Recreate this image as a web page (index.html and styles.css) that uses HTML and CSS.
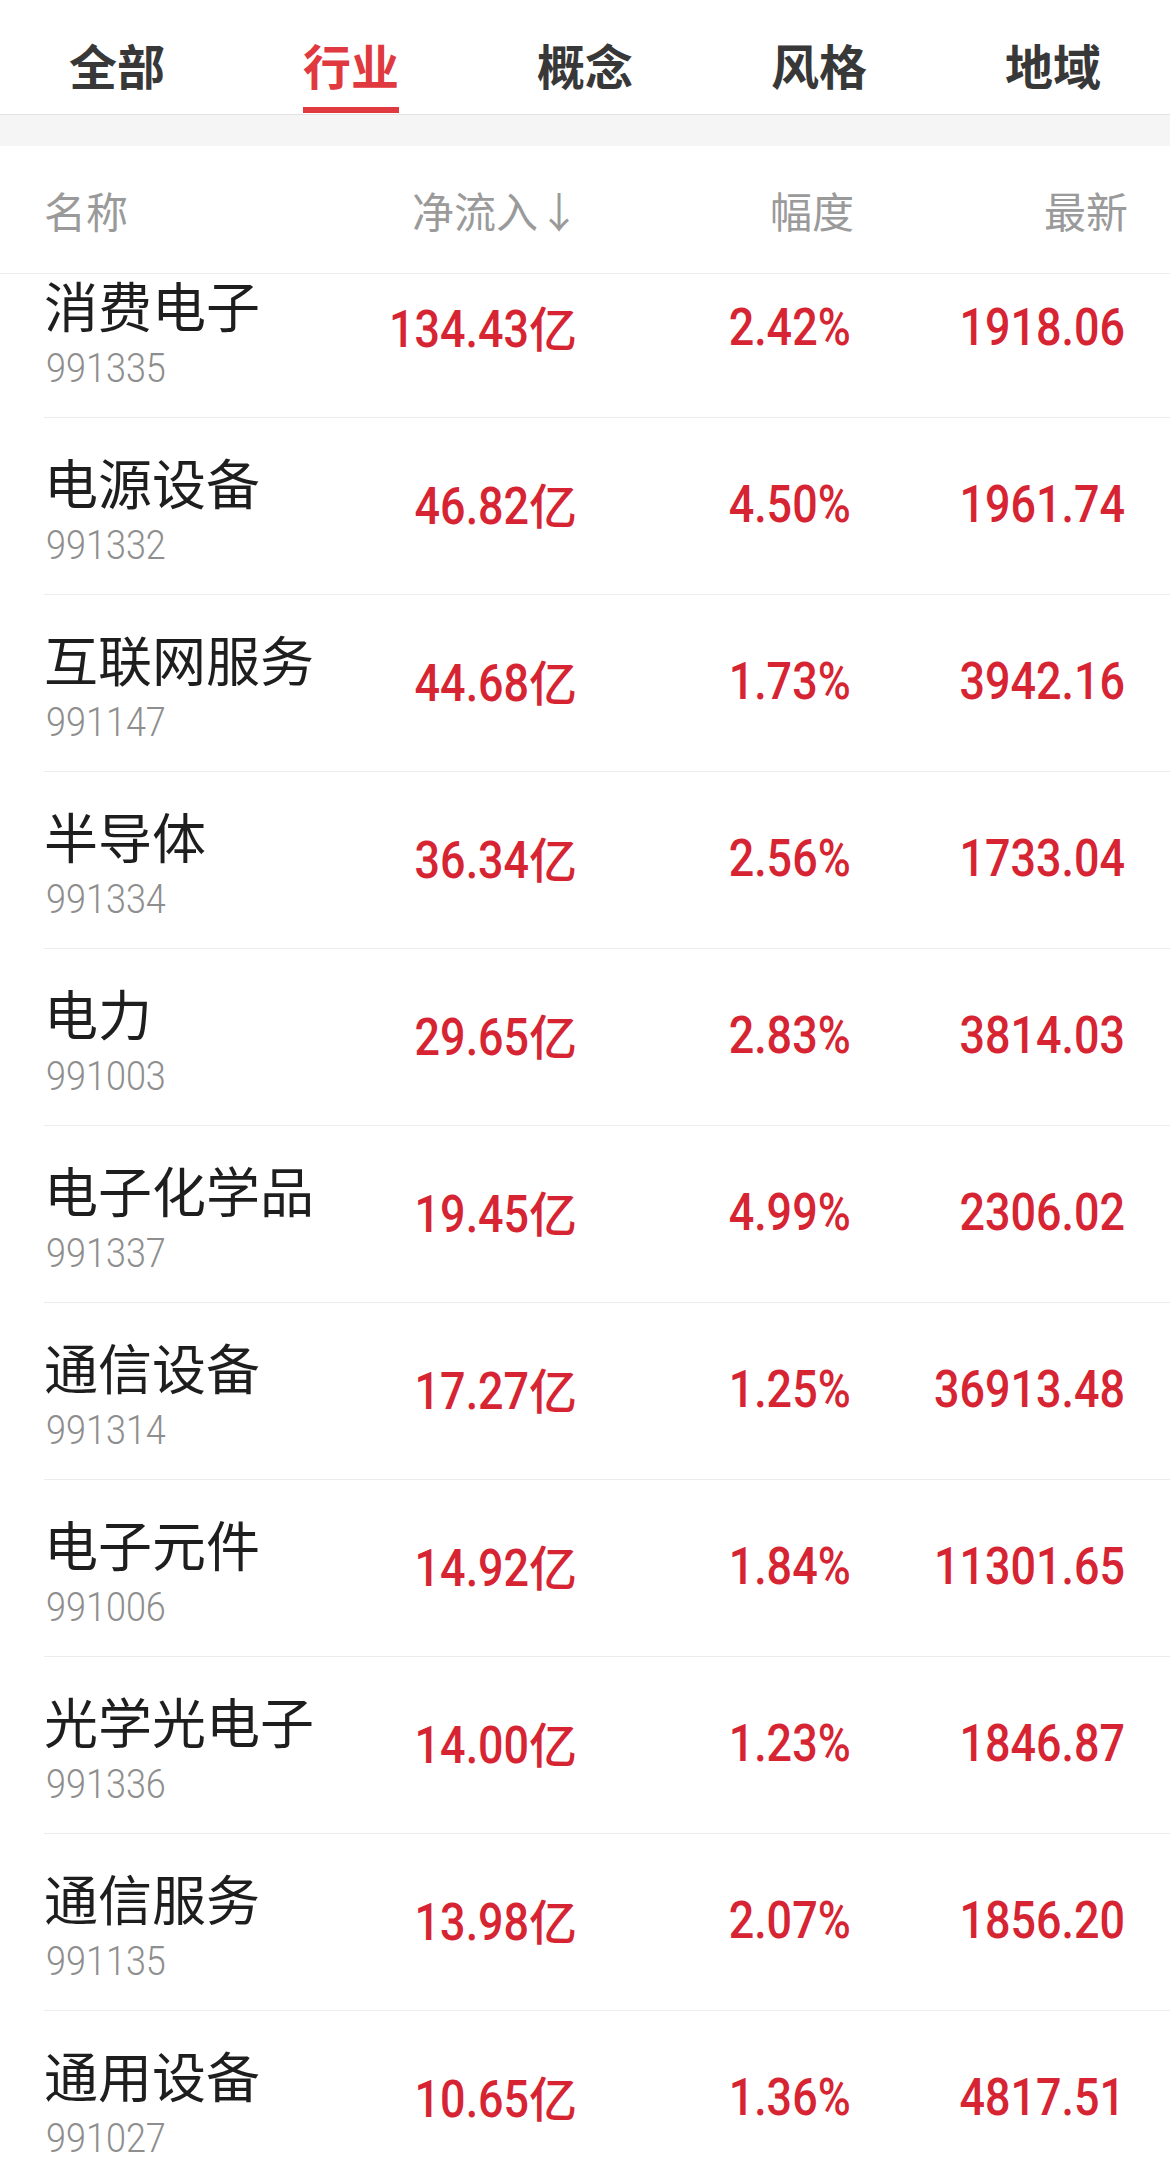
FILE: index.html
```html
<!DOCTYPE html>
<html lang="zh-CN">
<head>
    <meta charset="UTF-8">
    <meta name="viewport" content="width=device-width, initial-scale=1.0">
    <title>行业资金流向</title>
    <link rel="stylesheet" href="styles.css">
</head>
<body>
    <div class="tabs">
        <div class="tab"><span class="tab-label">全部</span></div>
        <div class="tab active"><span class="tab-label">行业</span></div>
        <div class="tab"><span class="tab-label">概念</span></div>
        <div class="tab"><span class="tab-label">风格</span></div>
        <div class="tab"><span class="tab-label">地域</span></div>
    </div>
    <div class="gap"></div>
    <div class="list-head">
        <span>名称</span>
        <span class="r">净流入↓</span>
        <span class="r">幅度</span>
        <span class="r">最新</span>
    </div>
    <div class="list">
        <!-- list is scrolled a little: the first row shows only its lower part -->
        <div class="row cut">
            <div class="name-cell"><div class="name">消费电子</div><div class="code"><span>991335</span></div></div>
            <div class="val"><span class="num">134.43</span><span class="unit">亿</span></div>
            <div class="val"><span class="num">2.42%</span></div>
            <div class="val"><span class="num">1918.06</span></div>
        </div>
        <div class="row">
            <div class="name-cell"><div class="name">电源设备</div><div class="code"><span>991332</span></div></div>
            <div class="val"><span class="num">46.82</span><span class="unit">亿</span></div>
            <div class="val"><span class="num">4.50%</span></div>
            <div class="val"><span class="num">1961.74</span></div>
        </div>
        <div class="row">
            <div class="name-cell"><div class="name">互联网服务</div><div class="code"><span>991147</span></div></div>
            <div class="val"><span class="num">44.68</span><span class="unit">亿</span></div>
            <div class="val"><span class="num">1.73%</span></div>
            <div class="val"><span class="num">3942.16</span></div>
        </div>
        <div class="row">
            <div class="name-cell"><div class="name">半导体</div><div class="code"><span>991334</span></div></div>
            <div class="val"><span class="num">36.34</span><span class="unit">亿</span></div>
            <div class="val"><span class="num">2.56%</span></div>
            <div class="val"><span class="num">1733.04</span></div>
        </div>
        <div class="row">
            <div class="name-cell"><div class="name">电力</div><div class="code"><span>991003</span></div></div>
            <div class="val"><span class="num">29.65</span><span class="unit">亿</span></div>
            <div class="val"><span class="num">2.83%</span></div>
            <div class="val"><span class="num">3814.03</span></div>
        </div>
        <div class="row">
            <div class="name-cell"><div class="name">电子化学品</div><div class="code"><span>991337</span></div></div>
            <div class="val"><span class="num">19.45</span><span class="unit">亿</span></div>
            <div class="val"><span class="num">4.99%</span></div>
            <div class="val"><span class="num">2306.02</span></div>
        </div>
        <div class="row">
            <div class="name-cell"><div class="name">通信设备</div><div class="code"><span>991314</span></div></div>
            <div class="val"><span class="num">17.27</span><span class="unit">亿</span></div>
            <div class="val"><span class="num">1.25%</span></div>
            <div class="val"><span class="num">36913.48</span></div>
        </div>
        <div class="row">
            <div class="name-cell"><div class="name">电子元件</div><div class="code"><span>991006</span></div></div>
            <div class="val"><span class="num">14.92</span><span class="unit">亿</span></div>
            <div class="val"><span class="num">1.84%</span></div>
            <div class="val"><span class="num">11301.65</span></div>
        </div>
        <div class="row">
            <div class="name-cell"><div class="name">光学光电子</div><div class="code"><span>991336</span></div></div>
            <div class="val"><span class="num">14.00</span><span class="unit">亿</span></div>
            <div class="val"><span class="num">1.23%</span></div>
            <div class="val"><span class="num">1846.87</span></div>
        </div>
        <div class="row">
            <div class="name-cell"><div class="name">通信服务</div><div class="code"><span>991135</span></div></div>
            <div class="val"><span class="num">13.98</span><span class="unit">亿</span></div>
            <div class="val"><span class="num">2.07%</span></div>
            <div class="val"><span class="num">1856.20</span></div>
        </div>
        <div class="row">
            <div class="name-cell"><div class="name">通用设备</div><div class="code"><span>991027</span></div></div>
            <div class="val"><span class="num">10.65</span><span class="unit">亿</span></div>
            <div class="val"><span class="num">1.36%</span></div>
            <div class="val"><span class="num">4817.51</span></div>
        </div>
    </div>
</body>
</html>
```

FILE: styles.css
```css
html, body {
    height: 2168px;
    overflow: hidden;
}
body {
    margin: 0;
    background: #fff;
    font-family: "Noto Sans CJK SC", "Noto Sans", sans-serif;
    color: #1e1e1e;
}
.tabs {
    display: flex;
    height: 114px;
    border-bottom: 1px solid #e2e2e2;
}
.tab {
    flex: 1;
    display: flex;
    flex-direction: column;
    align-items: center;
    padding-top: 36px;
}
.tab-label {
    display: block;
    font-size: 48px;
    line-height: 56px;
    font-weight: 700;
    color: #383838;
}
.tab.active .tab-label {
    color: #e03a40;
}
.tab.active .tab-label::after {
    content: "";
    display: block;
    height: 6px;
    margin-top: 15px;
    background: #e03a40;
}
.gap {
    height: 31px;
    background: #f5f5f5;
}
.list-head {
    display: grid;
    grid-template-columns: minmax(0, 1fr) 274px 274px 274px;
    align-items: center;
    height: 127px;
    padding: 0 42px 0 44px;
    border-bottom: 1px solid #ededed;
    font-size: 42px;
    line-height: 50px;
    color: #9a9a9a;
}
.list-head .r {
    text-align: right;
}
.row {
    display: grid;
    grid-template-columns: minmax(0, 1fr) 274px 274px 274px;
    align-items: center;
    box-sizing: border-box;
    height: 177px;
    margin-left: 44px;
    padding: 8px 45px 0 0;
    border-bottom: 1px solid #ececec;
}
.row.cut {
    height: 144px;
    padding-top: 0;
    padding-bottom: 25px;
}
.name-cell {
    white-space: nowrap;
}
.name {
    font-size: 54px;
    line-height: 60px;
    color: #1e1e1e;
}
.code {
    margin-top: 12px;
    height: 44px;
}
.code span {
    display: inline-block;
    margin-left: 2px;
    font-family: Roboto, "Liberation Sans", sans-serif;
    font-weight: 300;
    font-size: 40px;
    line-height: 44px;
    color: #8e8e8e;
    transform: scaleX(0.9);
    transform-origin: left center;
}
.val {
    text-align: right;
    white-space: nowrap;
    color: #d62433;
    line-height: 60px;
}
.num {
    display: inline-block;
    font-family: Roboto, "Liberation Sans", sans-serif;
    font-weight: 500;
    font-size: 51px;
    transform: scaleX(0.88);
    transform-origin: right center;
}
.unit {
    font-family: "Noto Sans CJK SC", sans-serif;
    font-weight: 500;
    font-size: 48px;
}
```
